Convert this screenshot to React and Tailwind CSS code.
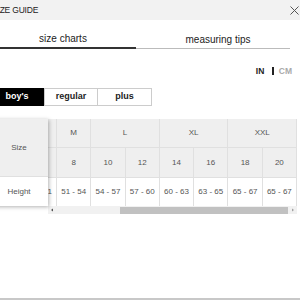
export default function App() {
  const row1 = [
    { l: "S", c: "col-span-2" },
    { l: "M", c: "col-span-1" },
    { l: "L", c: "col-span-2" },
    { l: "XL", c: "col-span-2" },
    { l: "XXL", c: "col-span-2" },
  ];
  const row2 = ["4", "6", "8", "10", "12", "14", "16", "18", "20"];
  const row3 = ["45 - 48", "48 - 51", "51 - 54", "54 - 57", "57 - 60", "60 - 63", "63 - 65", "65 - 67", "65 - 67"];

  return (
    <div className="w-[300px] h-[300px] overflow-hidden bg-white border-b-2 border-[#c8c8c8] font-['Liberation_Sans',Arial,sans-serif]">
      <div className="-ml-[10px] w-[310px] flex flex-col">
        {/* header */}
        <div className="h-[20px] bg-[#f2f2f2] flex items-center justify-between pl-[2px] pr-[1px]">
          <span className="text-[8.5px] leading-none text-[#222] tracking-[-0.2px]">SIZE GUIDE</span>
          <svg width="9" height="9" viewBox="0 0 9 9" className="block">
            <path d="M0.5 0.5 L8.5 8.5 M8.5 0.5 L0.5 8.5" stroke="#555" strokeWidth="1" fill="none" />
          </svg>
        </div>

        {/* tabs */}
        <div className="flex items-end pt-[13px]">
          <div className="w-[146px] text-center text-[10px] leading-[12px] text-[#222] pb-[2px] border-b-2 border-[#333]">
            size charts
          </div>
          <div className="w-[154px] pl-[10px] text-center text-[10px] leading-[12px] text-[#222] pb-[2px] border-b border-[#bbb]">
            measuring tips
          </div>
        </div>

        {/* units */}
        <div className="mt-[17px] h-[10px] flex items-center justify-end pr-[8px]">
          <span className="text-[8.5px] leading-none font-bold text-[#222]">IN</span>
          <span className="ml-[8px] w-[1.5px] h-[8px] bg-[#222]" />
          <span className="ml-[5px] text-[8.5px] leading-none font-bold text-[#aaa]">CM</span>
        </div>

        {/* buttons */}
        <div className="mt-[12px] flex">
          <div className="w-[54px] h-[18px] bg-black border border-black text-white text-[9px] font-bold flex items-center justify-center">
            boy's
          </div>
          <div className="w-[54px] h-[18px] border border-[#ccc] text-[#222] text-[9px] font-bold flex items-center justify-center">
            regular
          </div>
          <div className="w-[54px] h-[18px] border-y border-r border-[#ccc] text-[#222] text-[9px] font-bold flex items-center justify-center">
            plus
          </div>
        </div>

        {/* table */}
        <div className="mt-[13px] flex">
          <div className="w-[58px] shrink-0 relative z-10 bg-white shadow-[1px_1px_4px_rgba(0,0,0,0.3)] text-[8px] text-[#555]">
            <div className="h-[58px] bg-[#efefef] border-b border-[#e0e0e0] flex items-center justify-center">Size</div>
            <div className="h-[29px] flex items-center justify-center">Height</div>
          </div>
          <div className="w-[249px] shrink-0 overflow-hidden flex justify-end">
            <div className="shrink-0 grid grid-cols-[repeat(9,34.29px)] text-[8px] text-[#555]">
              {row1.map((c, i) => (
                <div key={"a" + i} className={c.c + " h-[29px] bg-[#efefef] border-r border-b border-[#e0e0e0] flex items-center justify-center"}>
                  {c.l}
                </div>
              ))}
              {row2.map((c, i) => (
                <div key={"b" + i} className="h-[29px] bg-[#efefef] border-r border-[#e0e0e0] flex items-center justify-center">
                  {c}
                </div>
              ))}
              {row3.map((c, i) => (
                <div key={"c" + i} className="h-[29px] bg-white border-r border-t border-[#e0e0e0] flex items-center justify-center whitespace-nowrap">
                  {c}
                </div>
              ))}
            </div>
          </div>
        </div>

        {/* scrollbar */}
        <div className="ml-[58px] w-[249px] h-[8px] bg-[#f1f1f1] flex items-center">
          <div className="w-[8px] h-[8px] flex items-center justify-center">
            <svg width="4" height="4" viewBox="0 0 4 4"><path d="M3 0.5 L1 2 L3 3.5 Z" fill="#505050" /></svg>
          </div>
          <div className="w-[64px]" />
          <div className="w-[168px] h-[7px] bg-[#c1c1c1]" />
          <div className="w-[1px]" />
          <div className="w-[8px] h-[8px] flex items-center justify-center">
            <svg width="4" height="4" viewBox="0 0 4 4"><path d="M1 0.5 L3 2 L1 3.5 Z" fill="#a0a0a0" /></svg>
          </div>
        </div>
      </div>
    </div>
  );
}
